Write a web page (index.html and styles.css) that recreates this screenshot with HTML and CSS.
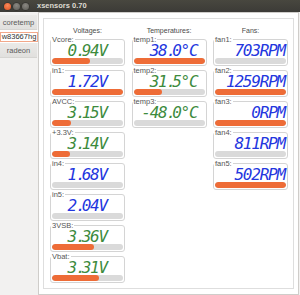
FILE: index.html
```html
<!DOCTYPE html>
<html lang="en">
<head>
    <meta charset="UTF-8">
    <title>xsensors 0.70</title>
    <link rel="stylesheet" href="styles.css">
</head>
<body>
    <div class="window">
        <div class="titlebar">
            <span class="btn close"></span>
            <span class="btn"></span>
            <span class="btn"></span>
            <span class="title">xsensors 0.70</span>
        </div>

        <div class="main">
            <div class="tabs">
                <div class="tab">coretemp</div>
                <div class="tab active"><span class="focus">w83667hg</span></div>
                <div class="tab">radeon</div>
            </div>

            <div class="page">
                <div class="frame">
                    <div class="column volts">
                        <div class="heading">Voltages:</div>
                        <div class="sensor">
                            <div class="label">Vcore:</div>
                            <div class="value green">0<span class="dot">.</span>94V</div>
                            <div class="bar"><div class="fill" style="width: 53%"></div></div>
                        </div>
                        <div class="sensor">
                            <div class="label">in1:</div>
                            <div class="value blue">1<span class="dot">.</span>72V</div>
                            <div class="bar"><div class="fill" style="width: 100%"></div></div>
                        </div>
                        <div class="sensor">
                            <div class="label">AVCC:</div>
                            <div class="value green">3<span class="dot">.</span>15V</div>
                            <div class="bar"><div class="fill" style="width: 27%"></div></div>
                        </div>
                        <div class="sensor">
                            <div class="label">+3.3V:</div>
                            <div class="value green">3<span class="dot">.</span>14V</div>
                            <div class="bar"><div class="fill" style="width: 25%"></div></div>
                        </div>
                        <div class="sensor">
                            <div class="label">in4:</div>
                            <div class="value blue">1<span class="dot">.</span>68V</div>
                            <div class="bar"><div class="fill" style="width: 0%"></div></div>
                        </div>
                        <div class="sensor">
                            <div class="label">in5:</div>
                            <div class="value blue">2<span class="dot">.</span>04V</div>
                            <div class="bar"><div class="fill" style="width: 0%"></div></div>
                        </div>
                        <div class="sensor">
                            <div class="label">3VSB:</div>
                            <div class="value green">3<span class="dot">.</span>36V</div>
                            <div class="bar"><div class="fill" style="width: 59%"></div></div>
                        </div>
                        <div class="sensor">
                            <div class="label">Vbat:</div>
                            <div class="value green">3<span class="dot">.</span>31V</div>
                            <div class="bar"><div class="fill" style="width: 66%"></div></div>
                        </div>
                    </div>

                    <div class="column temps">
                        <div class="heading">Temperatures:</div>
                        <div class="sensor">
                            <div class="label">temp1:</div>
                            <div class="value blue">38<span class="dot">.</span>0°C</div>
                            <div class="bar"><div class="fill" style="width: 100%"></div></div>
                        </div>
                        <div class="sensor">
                            <div class="label">temp2:</div>
                            <div class="value green">31<span class="dot">.</span>5°C</div>
                            <div class="bar"><div class="fill" style="width: 40%"></div></div>
                        </div>
                        <div class="sensor">
                            <div class="label">temp3:</div>
                            <div class="value green">-48<span class="dot">.</span>0°C</div>
                            <div class="bar"><div class="fill" style="width: 0%"></div></div>
                        </div>
                    </div>

                    <div class="column fans">
                        <div class="heading">Fans:</div>
                        <div class="sensor">
                            <div class="label">fan1:</div>
                            <div class="value blue">703RPM</div>
                            <div class="bar"><div class="fill" style="width: 0%"></div></div>
                        </div>
                        <div class="sensor">
                            <div class="label">fan2:</div>
                            <div class="value blue">1259RPM</div>
                            <div class="bar"><div class="fill" style="width: 100%"></div></div>
                        </div>
                        <div class="sensor">
                            <div class="label">fan3:</div>
                            <div class="value blue">0RPM</div>
                            <div class="bar"><div class="fill" style="width: 100%"></div></div>
                        </div>
                        <div class="sensor">
                            <div class="label">fan4:</div>
                            <div class="value blue">811RPM</div>
                            <div class="bar"><div class="fill" style="width: 0%"></div></div>
                        </div>
                        <div class="sensor">
                            <div class="label">fan5:</div>
                            <div class="value blue">502RPM</div>
                            <div class="bar"><div class="fill" style="width: 100%"></div></div>
                        </div>
                    </div>
                </div>
            </div>
        </div>
    </div>
</body>
</html>
```

FILE: styles.css
```css
body {
    margin: 0;
    background: #f2f1f0;
    font-family: "Liberation Sans", Arial, sans-serif;
}
.window {
    width: 300px;
    height: 295px;
    display: flex;
    flex-direction: column;
}
.titlebar {
    height: 12px;
    display: flex;
    align-items: center;
    padding-left: 4px;
    gap: 2px;
    background: linear-gradient(#48473f, #3c3b37);
}
.btn {
    width: 7px;
    height: 7px;
    border-radius: 50%;
    background: radial-gradient(circle at 50% 35%, #8a8882, #5c5b56);
    box-shadow: 0 0 0 0.5px #2e2d2a;
}
.btn.close {
    background: radial-gradient(circle at 50% 35%, #f98a5c, #e0501e);
}
.title {
    margin-left: 6px;
    color: #dfdbd2;
    font-size: 7.5px;
    font-weight: bold;
    line-height: 12px;
}
.main {
    flex: 1;
    display: flex;
}
.tabs {
    width: 38px;
    padding-top: 3px;
    display: flex;
    flex-direction: column;
}
.tab {
    height: 15px;
    margin-right: 1px;
    display: flex;
    align-items: center;
    justify-content: center;
    font-size: 7.5px;
    color: #5a5a5a;
    background: linear-gradient(#ebeae8, #e0dfdd);
    box-shadow: inset 0 -1px 0 #d6d5d2;
}
.tab.active {
    height: 13px;
    background: #fff;
    box-shadow: none;
    margin-right: 0;
}
.focus {
    padding: 0 1px;
    border: 1px solid #f2a88a;
    color: #333;
    line-height: 8px;
}
.page {
    flex: 1;
    margin-right: 1px;
    padding: 5px 4px;
    background: #fff;
    border: 1px solid #cfcdca;
}
.frame {
    height: 100%;
    box-sizing: border-box;
    padding: 0 5px 0 6px;
    border: 1px solid #dedede;
    display: grid;
    grid-template-columns: 75px 75px 75px;
    column-gap: 6.5px;
    align-items: start;
}
.column {
    padding-top: 7px;
}
.heading {
    font-size: 7px;
    line-height: 9px;
    color: #4a4a4a;
    text-align: center;
    margin-bottom: 4px;
}
.sensor {
    border: 1px solid #d4d4d4;
    border-radius: 3px;
    padding-bottom: 1px;
    margin-bottom: 4px;
}
.label {
    width: max-content;
    margin-top: -5px;
    padding: 0 1px;
    background: #fff;
    font-size: 7.5px;
    line-height: 9px;
    color: #555;
}
.value {
    font-family: "DejaVu Sans Mono", monospace;
    font-style: italic;
    font-size: 16px;
    line-height: 14px;
    letter-spacing: -1.2px;
    text-align: right;
}
.dot {
    letter-spacing: -4px;
}
.volts .value { padding-right: 17px; }
.temps .value { padding-right: 8px; }
.fans .value { padding-right: 2px; }
.green { color: #3d8b3d; }
.blue { color: #2336de; }
.bar {
    height: 6px;
    margin: 0 1px;
    border-radius: 3px;
    background: #dadada;
    overflow: hidden;
}
.fill {
    height: 100%;
    border-radius: 3px;
    background: #ee6c37;
}
```
